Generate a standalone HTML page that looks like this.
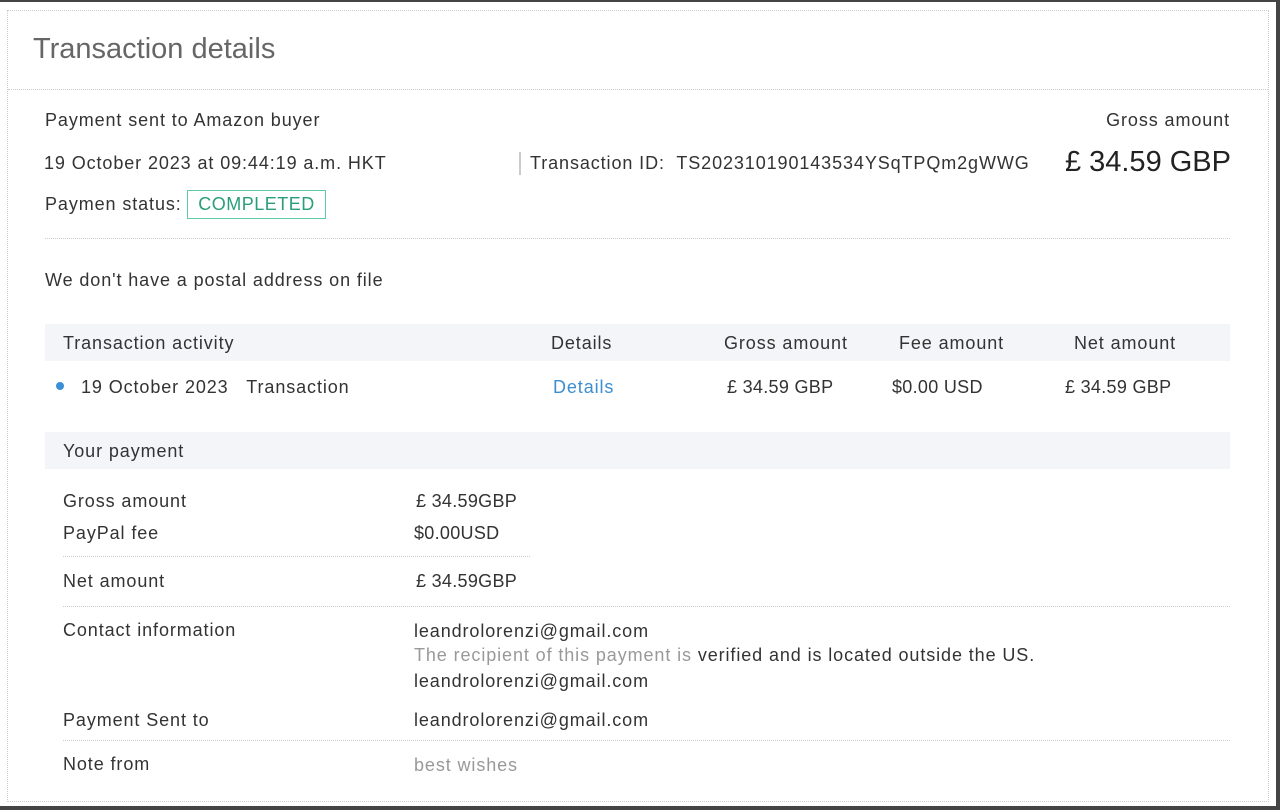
<!DOCTYPE html>
<html><head><meta charset="utf-8"><style>
html,body{margin:0;padding:0;width:1280px;height:810px;background:#fff;overflow:hidden;}
body{font-family:"Liberation Sans","DejaVu Sans",sans-serif;color:#333;position:relative;}
.t{position:absolute;white-space:nowrap;font-size:18px;line-height:24px;letter-spacing:0.9px;}
.hl{position:absolute;height:0;border-top:1px dotted #ccc;}
.bg{position:absolute;background:#f3f5f8;}
</style></head><body>
<div style="position:absolute;left:0;top:0;width:1280px;height:2px;background:#444"></div>
<div style="position:absolute;right:0;top:0;width:4px;height:810px;background:#444"></div>
<div style="position:absolute;left:0;bottom:0;width:1280px;height:4px;background:#444"></div>
<div style="position:absolute;left:7px;top:10px;width:1260px;height:790px;border:1px dotted #ccc;"></div>
<div class="t" style="left:33px;top:31px;font-size:29px;line-height:36px;color:#666;letter-spacing:0;">Transaction details</div>
<div class="hl" style="left:8px;top:89px;width:1260px;"></div>

<div class="t" style="left:45px;top:108px;">Payment sent to Amazon buyer</div>
<div class="t" style="left:44px;top:151px;">19 October 2023 at 09:44:19 a.m. HKT</div>
<div class="t" style="left:45px;top:192px;">Paymen status:</div>
<div style="position:absolute;left:187px;top:190px;width:137px;height:27px;border:1px solid #5fc9a8;"></div>
<div class="t" style="left:187px;top:192px;width:139px;text-align:center;color:#2a9d7a;letter-spacing:0.5px;">COMPLETED</div>
<div style="position:absolute;left:519px;top:152px;width:2px;height:23px;background:#ccc"></div>
<div class="t" style="left:530px;top:151px;">Transaction ID:&nbsp; TS202310190143534YSqTPQm2gWWG</div>
<div class="t" style="right:50px;top:108px;">Gross amount</div>
<div class="t" style="right:49px;top:144px;font-size:29px;line-height:36px;color:#222;letter-spacing:0;">£ 34.59 GBP</div>
<div class="hl" style="left:45px;top:238px;width:1185px;"></div>

<div class="t" style="left:45px;top:268px;">We don't have a postal address on file</div>

<div class="bg" style="left:45px;top:324px;width:1185px;height:37px;"></div>
<div class="t" style="left:63px;top:331px;">Transaction activity</div>
<div class="t" style="left:551px;top:331px;">Details</div>
<div class="t" style="left:724px;top:331px;">Gross amount</div>
<div class="t" style="left:899px;top:331px;">Fee amount</div>
<div class="t" style="left:1074px;top:331px;">Net amount</div>
<div style="position:absolute;left:56px;top:382px;width:8px;height:8px;border-radius:50%;background:#3a8fd6"></div>
<div class="t" style="left:81px;top:375px;">19 October 2023&nbsp;&nbsp;&nbsp;Transaction</div>
<div class="t" style="left:553px;top:375px;color:#3d8ed0;">Details</div>
<div class="t" style="left:727px;top:375px;letter-spacing:0.3px;">£ 34.59 GBP</div>
<div class="t" style="left:892px;top:375px;letter-spacing:0.3px;">$0.00 USD</div>
<div class="t" style="left:1065px;top:375px;letter-spacing:0.3px;">£ 34.59 GBP</div>

<div class="bg" style="left:45px;top:432px;width:1185px;height:37px;"></div>
<div class="t" style="left:63px;top:439px;">Your payment</div>
<div class="t" style="left:63px;top:489px;">Gross amount</div>
<div class="t" style="left:416px;top:489px;letter-spacing:0.3px;">£ 34.59GBP</div>
<div class="t" style="left:63px;top:521px;">PayPal fee</div>
<div class="t" style="left:414px;top:521px;letter-spacing:0.3px;">$0.00USD</div>
<div class="hl" style="left:63px;top:556px;width:467px;"></div>
<div class="t" style="left:63px;top:569px;">Net amount</div>
<div class="t" style="left:416px;top:569px;letter-spacing:0.3px;">£ 34.59GBP</div>
<div class="hl" style="left:63px;top:606px;width:1167px;"></div>
<div class="t" style="left:63px;top:618px;">Contact information</div>
<div class="t" style="left:414px;top:619px;">leandrolorenzi@gmail.com</div>
<div class="t" style="left:414px;top:643px;"><span style="color:#999">The recipient of this payment is</span> verified and is located outside the US.</div>
<div class="t" style="left:414px;top:669px;">leandrolorenzi@gmail.com</div>
<div class="t" style="left:63px;top:708px;">Payment Sent to</div>
<div class="t" style="left:414px;top:708px;">leandrolorenzi@gmail.com</div>
<div class="hl" style="left:63px;top:740px;width:1167px;"></div>
<div class="t" style="left:63px;top:752px;">Note from</div>
<div class="t" style="left:414px;top:753px;color:#999;">best wishes</div>
</body></html>
